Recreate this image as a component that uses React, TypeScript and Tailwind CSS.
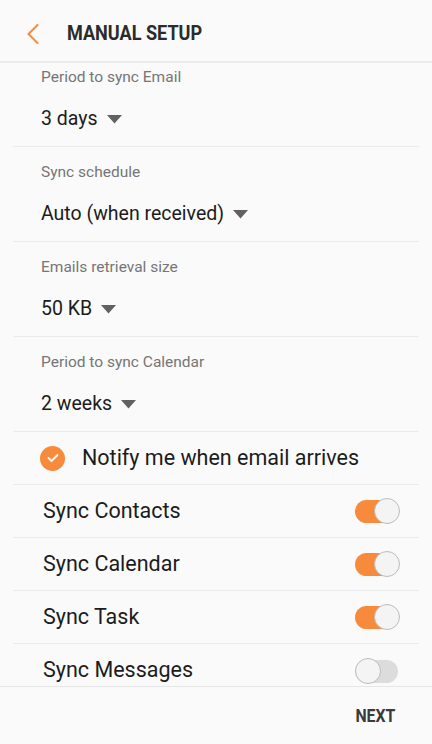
import React from "react";

const ORANGE = "#f88a3b";

function Caret() {
  return (
    <svg width="15" height="9" viewBox="0 0 15 9" className="ml-[9px] shrink-0">
      <path d="M0 0 H15 L7.5 8.5 Z" fill="#616161" />
    </svg>
  );
}

function Dropdown({ label, value, first }: { label: string; value: string; first?: boolean }) {
  return (
    <div className="mx-[13px] border-b border-[#ebebeb] px-[28px]">
      <div className={`${first ? "pt-[5px]" : "pt-[15px]"} text-[15.5px] leading-[20px] text-[#767676]`}>{label}</div>
      <div className="mt-[19px] mb-[14px] flex h-[26px] items-center text-[19.5px] leading-[26px] text-[#1c1c1c]">
        <span>{value}</span>
        <Caret />
      </div>
    </div>
  );
}

function Toggle({ on }: { on: boolean }) {
  return (
    <div className="relative h-[26px] w-[45px] shrink-0">
      <div
        className={`absolute left-0 right-[2px] top-[2px] h-[23px] rounded-full ${on ? "bg-[#f88a3b]" : "bg-[#dcdcdc]"}`}
      />
      <div
        className={`absolute top-0 h-[26px] w-[26px] rounded-full border border-[#bdbdbd] bg-[#f4f4f4] ${on ? "right-0" : "left-0"}`}
      />
    </div>
  );
}

function SwitchRow({ label, on, last }: { label: string; on: boolean; last?: boolean }) {
  return (
    <div className={`mx-[13px] flex h-[53px] items-center justify-between pl-[30px] pr-[19px] ${last ? "" : "border-b border-[#ebebeb]"}`}>
      <span className="text-[21.5px] text-[#1c1c1c]">{label}</span>
      <Toggle on={on} />
    </div>
  );
}

export default function App() {
  return (
    <div
      className="flex h-[744px] w-[432px] flex-col overflow-hidden bg-[#fafafa]"
      style={{ fontFamily: "Roboto, 'Noto Sans', sans-serif" }}
    >
      <div className="flex h-[63px] shrink-0 items-center border-b-2 border-[#ebebeb] pt-[6px]">
        <svg width="14" height="20" viewBox="0 0 14 20" className="ml-[26px]">
          <path d="M11.5 1 L2.5 10 L11.5 19" fill="none" stroke={ORANGE} strokeWidth="2" strokeLinecap="round" strokeLinejoin="round" />
        </svg>
        <span className="ml-[27px] origin-left scale-x-[0.86] whitespace-nowrap text-[21px] font-bold text-[#2b2b2b]">MANUAL SETUP</span>
      </div>
      <div className="-mt-px flex-1 overflow-hidden">
        <Dropdown first label="Period to sync Email" value="3 days" />
        <Dropdown label="Sync schedule" value="Auto (when received)" />
        <Dropdown label="Emails retrieval size" value="50 KB" />
        <Dropdown label="Period to sync Calendar" value="2 weeks" />
        <div className="mx-[13px] flex h-[53px] items-center border-b border-[#ebebeb] pl-[27px]">
          <div className="flex h-[25px] w-[25px] items-center justify-center rounded-full" style={{ background: ORANGE }}>
            <svg width="12" height="10" viewBox="0 0 12 10">
              <path d="M1.5 5 L4.5 8 L10.5 2" fill="none" stroke="#fff" strokeWidth="1.8" strokeLinecap="round" strokeLinejoin="round" />
            </svg>
          </div>
          <span className="ml-[17px] text-[21.5px] text-[#1c1c1c]">Notify me when email arrives</span>
        </div>
        <SwitchRow label="Sync Contacts" on />
        <SwitchRow label="Sync Calendar" on />
        <SwitchRow label="Sync Task" on />
        <SwitchRow label="Sync Messages" on={false} last />
      </div>
      <div className="flex h-[58px] shrink-0 items-center justify-end border-t border-[#e6e6e6] pr-[37px]">
        <span className="origin-right scale-x-[0.88] text-[18px] font-bold text-[#3a3a3a]">NEXT</span>
      </div>
    </div>
  );
}
